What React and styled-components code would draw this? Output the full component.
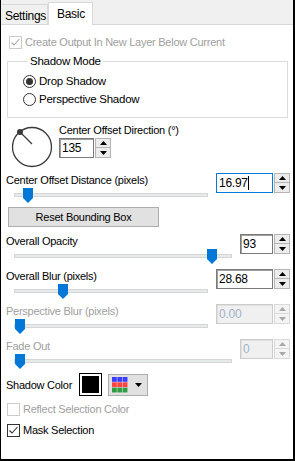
import React from 'react'
import styled, { createGlobalStyle } from 'styled-components'

const GlobalStyle = createGlobalStyle`
  html, body {
    margin: 0;
    padding: 0;
    background: #fff;
  }
  body {
    font-family: "Liberation Sans", Arial, sans-serif;
    font-size: 11px;
    letter-spacing: -0.25px;
    color: #000;
  }
`

function Check({ checked, disabled }) {
  return (
    <CheckBox $disabled={disabled}>
      {checked && (
        <svg width="11" height="11" viewBox="0 0 11 11">
          <path d="M1.5 5.5 L4 8 L9.5 2" fill="none" stroke={disabled ? '#a8a8a8' : '#333'} strokeWidth="1.1" />
        </svg>
      )}
    </CheckBox>
  )
}

function Spin({ value, width, focused, disabled, caret }) {
  return (
    <SpinWrap>
      <SpinInput $w={width} $focused={focused} $disabled={disabled}>
        {value}
        {caret && <Caret />}
      </SpinInput>
      <SpinButtons>
        <SpinBtn $disabled={disabled}>
          <svg width="7" height="4" viewBox="0 0 7 4"><path d="M0 4 L3.5 0 L7 4 Z" fill={disabled ? '#a8a8a8' : '#000'} /></svg>
        </SpinBtn>
        <SpinBtn $disabled={disabled}>
          <svg width="7" height="4" viewBox="0 0 7 4"><path d="M0 0 L3.5 4 L7 0 Z" fill={disabled ? '#a8a8a8' : '#000'} /></svg>
        </SpinBtn>
      </SpinButtons>
    </SpinWrap>
  )
}

function Slider({ pos }) {
  return (
    <TrackWrap>
      <Track>
        <Thumb style={{ left: `calc((100% - 10px) * ${pos})` }}>
          <svg width="10" height="15" viewBox="0 0 10 15">
            <path d="M0 0 H10 V10 L5 15 L0 10 Z" fill="#0078d7" />
          </svg>
        </Thumb>
      </Track>
    </TrackWrap>
  )
}

function SliderBlock({ label, value, pos, narrow, focused, disabled, caret }) {
  return (
    <Block>
      <LeftCol>
        <Label $disabled={disabled}>{label}</Label>
        <Slider pos={pos} />
      </LeftCol>
      <Spin value={value} width={narrow ? 33 : 57} focused={focused} disabled={disabled} caret={caret} />
    </Block>
  )
}

export default function App() {
  return (
    <>
      <GlobalStyle />
      <Window>
        <TabStrip>
          <Tab>Settings</Tab>
          <Tab $active>Basic</Tab>
        </TabStrip>
        <Content>
          <CheckRow>
            <Check checked disabled />
            <Label $disabled>Create Output In New Layer Below Current</Label>
          </CheckRow>

          <Group>
            <Legend>Shadow Mode</Legend>
            <RadioRow>
              <Radio $on />
              <Label>Drop Shadow</Label>
            </RadioRow>
            <RadioRow>
              <Radio />
              <Label>Perspective Shadow</Label>
            </RadioRow>
          </Group>

          <DialRow>
            <Dial width="42" height="42" viewBox="0 0 42 42">
              <circle cx="21" cy="21" r="19.5" fill="none" stroke="#3a3a3a" strokeWidth="1.3" />
              <line x1="9" y1="6" x2="21" y2="18" stroke="#3a3a3a" strokeWidth="1.3" />
              <circle cx="9" cy="6" r="3" fill="#3a3a3a" />
            </Dial>
            <DialCol>
              <Label>Center Offset Direction (°)</Label>
              <Spin value="135" width={35} />
            </DialCol>
          </DialRow>

          <SliderBlock label="Center Offset Distance (pixels)" value="16.97" pos={0.045} focused caret />

          <ResetButton>Reset Bounding Box</ResetButton>

          <SliderBlock label="Overall Opacity" value="93" pos={0.93} narrow />
          <SliderBlock label="Overall Blur (pixels)" value="28.68" pos={0.234} />
          <SliderBlock label="Perspective Blur (pixels)" value="0.00" pos={0} disabled />
          <SliderBlock label="Fade Out" value="0" pos={0} narrow disabled />

          <ColorRow>
            <ColorLabel>Shadow Color</ColorLabel>
            <Swatch><SwatchFill /></Swatch>
            <PaletteButton>
              <svg width="16" height="16" viewBox="0 0 16 16">
                {[0, 1, 2].map((r) =>
                  [0, 1, 2].map((c) => (
                    <rect
                      key={`${r}-${c}`}
                      x={c * 5.33}
                      y={r * 5.33}
                      width="4.8"
                      height="4.8"
                      fill={['#3d3dff', '#ff4242', '#2f9e44'][r]}
                    />
                  ))
                )}
              </svg>
              <svg width="7" height="4" viewBox="0 0 7 4"><path d="M0 0 L3.5 4 L7 0 Z" fill="#000" /></svg>
            </PaletteButton>
          </ColorRow>

          <CheckRow $mt={6}>
            <Check disabled />
            <Label $disabled>Reflect Selection Color</Label>
          </CheckRow>
          <CheckRow $mt={7}>
            <Check checked />
            <Label>Mask Selection</Label>
          </CheckRow>
        </Content>
      </Window>
    </>
  )
}

// Styled Components
const Window = styled.div`
  width: 295px;
  height: 461px;
  box-sizing: border-box;
  border-left: 1px solid #000;
  border-right: 2px solid #000;
  border-bottom: 2px solid #000;
  background: #fff;
  overflow: hidden;
`

const TabStrip = styled.div`
  height: 25px;
  box-sizing: border-box;
  background: #f0f0f0;
  border-bottom: 1px solid #d9d9d9;
  display: flex;
  align-items: flex-end;
  padding-left: 1px;
`

const Tab = styled.div`
  box-sizing: border-box;
  height: ${(p) => (p.$active ? '23px' : '20px')};
  width: ${(p) => (p.$active ? '45px' : '46px')};
  margin-bottom: ${(p) => (p.$active ? '-1px' : '0')};
  padding: ${(p) => (p.$active ? '4px 0 0 8px' : '4px 0 0 3px')};
  background: ${(p) => (p.$active ? '#fff' : '#f0f0f0')};
  border: 1px solid #d9d9d9;
  border-bottom: none;
  border-left: ${(p) => (p.$active ? '1px solid #d9d9d9' : 'none')};
  font-size: 12px;
  letter-spacing: -0.3px;
  line-height: 14px;
`

const Content = styled.div`
  padding: 0 3px 0 5px;
  display: flex;
  flex-direction: column;
`

const Label = styled.span`
  line-height: 14px;
  height: 14px;
  white-space: nowrap;
  color: ${(p) => (p.$disabled ? '#a0a0a0' : '#000')};
`

const CheckRow = styled.div`
  display: flex;
  align-items: center;
  gap: 3px;
  height: 14px;
  margin-top: ${(p) => (p.$mt != null ? p.$mt : 10)}px;
  padding-left: ${(p) => (p.$mt != null ? 1 : 3)}px;
`

const CheckBox = styled.div`
  width: 13px;
  height: 13px;
  box-sizing: border-box;
  border: 1px solid ${(p) => (p.$disabled ? '#cccccc' : '#333')};
  background: #fff;
  display: flex;
  align-items: center;
  justify-content: center;
`

const Group = styled.fieldset`
  margin: 5px 2px 0 1px;
  padding: 6px 0 11px 15px;
  border: 1px solid #dcdcdc;
  display: flex;
  flex-direction: column;
  gap: 4px;
`

const Legend = styled.legend`
  padding: 0 2px;
  margin-left: 5px;
  line-height: 14px;
  font-size: 11.5px;
`

const RadioRow = styled.div`
  display: flex;
  align-items: center;
  gap: 3px;
  height: 14px;
  font-size: 11.5px;
`

const Radio = styled.div`
  width: 13px;
  height: 13px;
  box-sizing: border-box;
  border-radius: 50%;
  border: 1px solid #333;
  display: flex;
  align-items: center;
  justify-content: center;

  &::after {
    content: '';
    width: 7px;
    height: 7px;
    border-radius: 50%;
    background: ${(p) => (p.$on ? '#333' : 'transparent')};
  }
`

const DialRow = styled.div`
  display: flex;
  margin-top: 5px;
  height: 45px;
`

const Dial = styled.svg`
  margin: 3px 0 0 5px;
  flex: none;
`

const DialCol = styled.div`
  display: flex;
  flex-direction: column;
  gap: 1px;
  margin-left: 6px;
`

const SpinWrap = styled.div`
  display: flex;
  gap: 1px;
  height: 20px;
`

const SpinInput = styled.div`
  box-sizing: border-box;
  width: ${(p) => p.$w}px;
  height: 20px;
  padding: 2px 0 0 2px;
  font-size: 12px;
  line-height: 15px;
  background: ${(p) => (p.$disabled ? '#f0f0f0' : '#fff')};
  color: ${(p) => (p.$disabled ? '#9fb3c8' : '#000')};
  border: 1px solid ${(p) => (p.$focused ? '#0078d7' : p.$disabled ? '#cccccc' : '#7a7a7a')};
  box-shadow: inset 1px 1px 0 ${(p) => (p.$focused ? '#fff' : p.$disabled ? '#e0e0e0' : '#a0a0a0')};
  display: flex;
  align-items: flex-start;
`

const Caret = styled.span`
  width: 1px;
  height: 14px;
  background: #000;
`

const SpinButtons = styled.div`
  display: flex;
  flex-direction: column;
  width: 16px;
`

const SpinBtn = styled.div`
  box-sizing: border-box;
  height: 10px;
  background: ${(p) => (p.$disabled ? '#f4f4f4' : '#ececec')};
  border: 1px solid ${(p) => (p.$disabled ? '#d9d9d9' : '#b5b5b5')};
  display: flex;
  align-items: center;
  justify-content: center;

  & + & {
    border-top: none;
  }
`

const Block = styled.div`
  display: grid;
  grid-template-columns: 1fr auto;
  margin-top: 5px;
  height: 30px;
`

const LeftCol = styled.div`
  display: flex;
  flex-direction: column;
`

const TrackWrap = styled.div`
  height: 16px;
  padding: 0 8px;
  display: flex;
  align-items: center;
`

const Track = styled.div`
  position: relative;
  flex: 1;
  height: 4px;
  box-sizing: border-box;
  background: #e7eaea;
  border: 1px solid #d6d6d6;
`

const Thumb = styled.div`
  position: absolute;
  top: -6px;
  width: 10px;
  height: 15px;
  line-height: 0;
`

const ResetButton = styled.div`
  margin: 4px 0 2px 2px;
  width: 151px;
  height: 20px;
  box-sizing: border-box;
  background: #e1e1e1;
  border: 1px solid #adadad;
  display: flex;
  align-items: center;
  justify-content: center;
`

const ColorRow = styled.div`
  display: flex;
  align-items: center;
  margin-top: 4px;
  height: 23px;
`

const ColorLabel = styled.span`
  width: 73px;
  white-space: nowrap;
`

const Swatch = styled.div`
  width: 23px;
  height: 23px;
  box-sizing: border-box;
  border: 1px solid #000;
  padding: 2px;
  background: #fff;
`

const SwatchFill = styled.div`
  width: 100%;
  height: 100%;
  background: #000;
`

const PaletteButton = styled.div`
  margin-left: 6px;
  width: 40px;
  height: 22px;
  box-sizing: border-box;
  background: #e1e1e1;
  border: 1px solid #adadad;
  display: flex;
  align-items: center;
  gap: 7px;
  padding-left: 3px;
`
